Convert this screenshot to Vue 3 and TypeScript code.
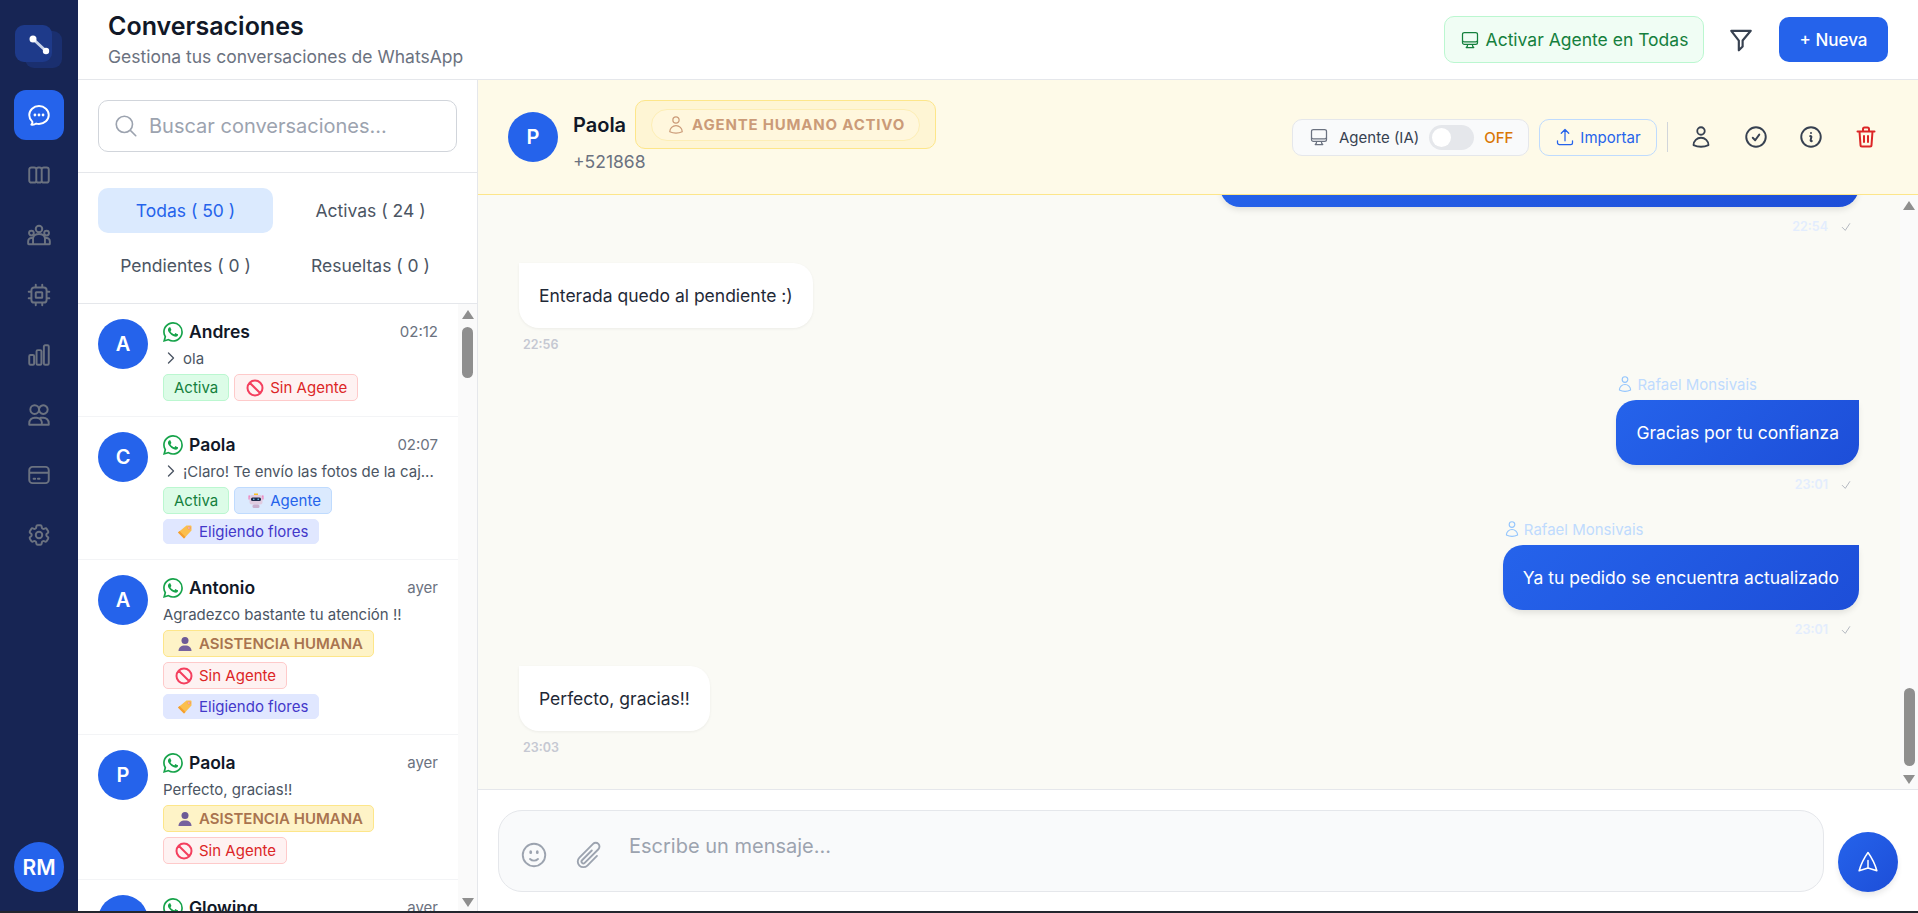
<script setup lang="ts">
const paths: Record<string, string> = {
  chat: "M8.625 12a.375.375 0 1 1-.75 0 .375.375 0 0 1 .75 0Zm0 0H8.25m4.125 0a.375.375 0 1 1-.75 0 .375.375 0 0 1 .75 0Zm0 0H12m4.125 0a.375.375 0 1 1-.75 0 .375.375 0 0 1 .75 0Zm0 0h-.375M21 12c0 4.556-4.03 8.25-9 8.25a9.764 9.764 0 0 1-2.555-.337A5.972 5.972 0 0 1 5.41 20.97a5.969 5.969 0 0 1-.474-.065 4.48 4.48 0 0 0 .978-2.025c.09-.457-.133-.901-.467-1.226C3.93 16.178 3 14.189 3 12c0-4.556 4.03-8.25 9-8.25s9 3.694 9 8.25Z",
  columns: "M5 5h2.5A2 2 0 0 1 9.5 7v10a2 2 0 0 1-2 2H5a2 2 0 0 1-2-2V7a2 2 0 0 1 2-2Zm4.5 2a2 2 0 0 1 2-2h1a2 2 0 0 1 2 2v10a2 2 0 0 1-2 2h-1a2 2 0 0 1-2-2M14.5 7a2 2 0 0 1 2-2H19a2 2 0 0 1 2 2v10a2 2 0 0 1-2 2h-2.5a2 2 0 0 1-2-2",
  group: "M15 6.5a3 3 0 1 1-6 0 3 3 0 0 1 6 0ZM7.2 10.2a2.2 2.2 0 1 1-4.4 0 2.2 2.2 0 0 1 4.4 0ZM21.2 10.2a2.2 2.2 0 1 1-4.4 0 2.2 2.2 0 0 1 4.4 0ZM2 20v-2.2a3 3 0 0 1 3-3h1.5a5.6 4.6 0 0 1 11 0H19a3 3 0 0 1 3 3V20a.5.5 0 0 1-.5.5h-19A.5.5 0 0 1 2 20Zm4.5-5.2V20m11-5.2V20",
  cpu: "M9 2.5V5m6-2.5V5M9 19v2.5m6-2.5v2.5M2.5 9H5m-2.500 6H5m14-6h2.500M19 15h2.500M7.500 5h9A2.500 2.500 0 0 1 19 7.500v9a2.500 2.500 0 0 1-2.500 2.500h-9A2.500 2.500 0 0 1 5 16.500v-9A2.500 2.500 0 0 1 7.500 5Zm2 4.500h5a.5.5 0 0 1 .5.5v4a.5.5 0 0 1-.5.5h-5a.5.5 0 0 1-.5-.5v-4a.5.5 0 0 1 .5-.5Z",
  chart: "M3 13.125C3 12.504 3.504 12 4.125 12h2.25c.621 0 1.125.504 1.125 1.125v6.75C7.5 20.496 6.996 21 6.375 21h-2.25A1.125 1.125 0 0 1 3 19.875v-6.75ZM9.750 8.625c0-.621.504-1.125 1.125-1.125h2.250c.621 0 1.125.504 1.125 1.125v11.250c0 .621-.504 1.125-1.125 1.125h-2.250a1.125 1.125 0 0 1-1.125-1.125V8.625ZM16.500 4.125c0-.621.504-1.125 1.125-1.125h2.250C20.496 3 21 3.504 21 4.125v15.750c0 .621-.504 1.125-1.125 1.125h-2.250a1.125 1.125 0 0 1-1.125-1.125V4.125Z",
  team: "M12 7a4 4 0 1 1-8 0 4 4 0 0 1 8 0Zm0 0a4 4 0 1 0 0-.01M12 7a4 4 0 1 1 8 0 4 4 0 0 1-8 0ZM3 21v-1.500a5 5 0 0 1 5-5h2a5 5 0 0 1 4.500 6.500H3Zm11 0h7v-1.500a5 5 0 0 0-5-5h-2.500",
  card: "M6 4.500h12A3 3 0 0 1 21 7.500v9a3 3 0 0 1-3 3H6a3 3 0 0 1-3-3v-9a3 3 0 0 1 3-3ZM3 10h18M7 15.500h1.500m2.500 0h1.500",
  cog: "M9.594 3.940c.09-.542.56-.94 1.110-.94h2.593c.55 0 1.020.398 1.110.94l.213 1.281c.063.374.313.686.645.870.074.04.147.083.22.127.325.196.72.257 1.075.124l1.217-.456a1.125 1.125 0 0 1 1.370.49l1.296 2.247a1.125 1.125 0 0 1-.26 1.431l-1.003.827c-.293.241-.438.613-.43.992a7.723 7.723 0 0 1 0 .255c-.008.378.137.75.43.991l1.004.827c.424.35.534.955.26 1.430l-1.298 2.247a1.125 1.125 0 0 1-1.369.491l-1.217-.456c-.355-.133-.75-.072-1.076.124a6.470 6.470 0 0 1-.22.128c-.331.183-.581.495-.644.869l-.213 1.281c-.09.543-.56.94-1.110.94h-2.594c-.55 0-1.019-.398-1.110-.94l-.213-1.281c-.062-.374-.312-.686-.644-.870a6.520 6.520 0 0 1-.22-.127c-.325-.196-.72-.257-1.076-.124l-1.217.456a1.125 1.125 0 0 1-1.369-.49l-1.297-2.247a1.125 1.125 0 0 1 .26-1.431l1.004-.827c.292-.24.437-.613.43-.991a6.932 6.932 0 0 1 0-.255c.007-.38-.138-.751-.43-.992l-1.004-.827a1.125 1.125 0 0 1-.26-1.430l1.297-2.247a1.125 1.125 0 0 1 1.370-.491l1.216.456c.356.133.751.072 1.076-.124.072-.044.146-.086.22-.128.332-.183.582-.495.644-.869l.214-1.280ZM15 12a3 3 0 1 1-6 0 3 3 0 0 1 6 0Z",
  monitor: "M9 17.250v1.007a3 3 0 0 1-.879 2.122L7.500 21h9l-.621-.621A3 3 0 0 1 15 18.257V17.250m6-12V15a2.250 2.250 0 0 1-2.250 2.250H5.250A2.250 2.250 0 0 1 3 15V5.250m18 0A2.250 2.250 0 0 0 18.750 3H5.250A2.250 2.250 0 0 0 3 5.250m18 0V12a2.250 2.250 0 0 1-2.250 2.250H5.250A2.250 2.250 0 0 1 3 12V5.250",
  funnel: "M3 3.500h18l-7.500 9v5.500L10 21.500v-9L3 3.500Z",
  search: "m21 21-5.197-5.197m0 0A7.500 7.500 0 1 0 5.196 5.196a7.500 7.500 0 0 0 10.607 10.607Z",
  upload: "M3 16.500v2.250A2.250 2.250 0 0 0 5.250 21h13.500A2.250 2.250 0 0 0 21 18.750V16.500m-13.500-9L12 3m0 0 4.500 4.500M12 3v13.500",
  user: "M15.750 6a3.750 3.750 0 1 1-7.500 0 3.750 3.750 0 0 1 7.500 0ZM4.501 20.118a7.500 7.500 0 0 1 14.998 0A17.933 17.933 0 0 1 12 21.750c-2.676 0-5.216-.584-7.499-1.632Z",
  check: "M9 12.750 11.250 15 15 9.750M21 12a9 9 0 1 1-18 0 9 9 0 0 1 18 0Z",
  info: "m11.250 11.250.041-.02a.75.75 0 0 1 1.063.852l-.708 2.836a.75.75 0 0 0 1.063.853l.041-.021M21 12a9 9 0 1 1-18 0 9 9 0 0 1 18 0Zm-9-3.750h.008v.008H12V8.250Z",
  trash: "M3.500 6.500h17M9 6.500V4a1.500 1.500 0 0 1 1.500-1.500h3A1.500 1.500 0 0 1 15 4v2.500M5.500 6.500l1 13.500a1.500 1.500 0 0 0 1.500 1.500h8a1.500 1.500 0 0 0 1.500-1.500l1-13.500M10 11v6m4-6v6",
  smile: "M15.182 15.182a4.500 4.500 0 0 1-6.364 0M21 12a9 9 0 1 1-18 0 9 9 0 0 1 18 0ZM9.750 9.750c0 .414-.168.75-.375.75S9 10.164 9 9.750 9.168 9 9.375 9s.375.336.375.75Zm5.250 0c0 .414-.168.75-.375.75s-.375-.336-.375-.75.168-.75.375-.75.375.336.375.75Z",
  clip: "m18.375 12.739-7.693 7.693a4.500 4.500 0 0 1-6.364-6.364l10.940-10.940A3 3 0 1 1 19.500 7.372L8.552 18.320m.009-.01-.01.01m5.699-9.941-7.810 7.810a1.500 1.500 0 0 0 2.112 2.130",
  send: "M6 12 3.269 3.125A59.769 59.769 0 0 1 21.485 12 59.768 59.768 0 0 1 3.270 20.875L5.999 12Zm0 0h7.500",
  chevron: "m8.250 4.500 7.500 7.500-7.500 7.500",
  ban: "M18.364 18.364A9 9 0 0 0 5.636 5.636m12.728 12.728A9 9 0 0 1 5.636 5.636m12.728 12.728L5.636 5.636",
  tick: "m4.500 12.750 6 6 9-13.500",
};

const whatsapp =
  "M13.601 2.326A7.854 7.854 0 0 0 7.994 0C3.627 0 .068 3.558.064 7.926c0 1.399.366 2.76 1.057 3.965L0 16l4.204-1.102a7.933 7.933 0 0 0 3.79.965h.004c4.368 0 7.926-3.558 7.93-7.93A7.898 7.898 0 0 0 13.6 2.326zM7.994 14.521a6.573 6.573 0 0 1-3.356-.92l-.24-.144-2.494.654.666-2.433-.156-.251a6.56 6.56 0 0 1-1.007-3.505c0-3.626 2.957-6.584 6.591-6.584a6.56 6.56 0 0 1 4.66 1.931 6.557 6.557 0 0 1 1.928 4.66c-.004 3.639-2.961 6.592-6.592 6.592zm3.615-4.934c-.197-.099-1.17-.578-1.353-.646-.182-.065-.315-.099-.445.099-.133.197-.513.646-.627.775-.114.133-.232.148-.43.05-.197-.1-.836-.308-1.592-.985-.59-.525-.985-1.175-1.103-1.372-.114-.198-.011-.304.088-.403.087-.088.197-.232.296-.346.1-.114.133-.198.198-.33.065-.134.034-.248-.015-.347-.05-.099-.445-1.076-.612-1.47-.16-.389-.323-.335-.445-.34-.114-.007-.247-.007-.38-.007a.729.729 0 0 0-.529.247c-.182.198-.691.677-.691 1.654 0 .977.71 1.916.81 2.049.098.133 1.394 2.132 3.383 2.992.47.205.84.326 1.129.418.475.152.904.129 1.246.08.38-.058 1.171-.48 1.338-.943.164-.464.164-.86.114-.943-.049-.084-.182-.133-.38-.232z";

const navItems = ["chat", "columns", "group", "cpu", "chart", "team", "card", "cog"];

const tabs = [
  { label: "Todas ( 50 )", active: true },
  { label: "Activas ( 24 )", active: false },
  { label: "Pendientes ( 0 )", active: false },
  { label: "Resueltas ( 0 )", active: false },
];

type Tag = "activa" | "sin" | "agente" | "flores" | "humana";

const conversations: { initial: string; name: string; time: string; preview: string; sent: boolean; tags: Tag[] }[] = [
  { initial: "A", name: "Andres", time: "02:12", preview: "ola", sent: true, tags: ["activa", "sin"] },
  { initial: "C", name: "Paola", time: "02:07", preview: "¡Claro! Te envío las fotos de la caj...", sent: true, tags: ["activa", "agente", "flores"] },
  { initial: "A", name: "Antonio", time: "ayer", preview: "Agradezco bastante tu atención !!", sent: false, tags: ["humana", "sin", "flores"] },
  { initial: "P", name: "Paola", time: "ayer", preview: "Perfecto, gracias!!", sent: false, tags: ["humana", "sin"] },
  { initial: "G", name: "Glowing", time: "ayer", preview: "", sent: false, tags: [] },
];

const tagLabels: Record<Tag, string> = {
  activa: "Activa",
  sin: "Sin Agente",
  agente: "Agente",
  flores: "Eligiendo flores",
  humana: "ASISTENCIA HUMANA",
};

const messages = [
  { out: true, text: "", time: "22:54", clipped: true },
  { out: false, text: "Enterada quedo al pendiente :)", time: "22:56" },
  { out: true, author: "Rafael Monsivais", text: "Gracias por tu confianza", time: "23:01" },
  { out: true, author: "Rafael Monsivais", text: "Ya tu pedido se encuentra actualizado", time: "23:01" },
  { out: false, text: "Perfecto, gracias!!", time: "23:03" },
];

const headerActions = [
  { icon: "user", cls: "" },
  { icon: "check", cls: "wide" },
  { icon: "info", cls: "wide" },
  { icon: "trash", cls: "danger" },
];
</script>

<template>
  <div class="app">
    <aside class="rail">
      <div class="logo">
        <svg viewBox="0 0 37 37" class="logo-mark">
          <line x1="18" y1="14" x2="31" y2="26" stroke="#c7d2e8" stroke-width="3" />
          <circle cx="18" cy="14" r="3.500" fill="#fff" />
          <circle cx="31" cy="26" r="3.200" fill="#fff" />
        </svg>
      </div>
      <nav class="rail-nav">
        <a v-for="(item, i) in navItems" :key="item" class="rail-link" :class="{ active: i === 0 }">
          <svg viewBox="0 0 24 24" class="icon-26"><path :d="paths[item]" /></svg>
        </a>
      </nav>
      <div class="rail-avatar">RM</div>
    </aside>

    <div class="main">
      <header class="topbar">
        <div>
          <h1>Conversaciones</h1>
          <p>Gestiona tus conversaciones de WhatsApp</p>
        </div>
        <div class="topbar-actions">
          <button class="btn-agent-all">
            <svg viewBox="0 0 24 24" class="icon-20"><path :d="paths.monitor" /></svg>
            Activar Agente en Todas
          </button>
          <button class="btn-filter">
            <svg viewBox="0 0 24 24" class="icon-26"><path :d="paths.funnel" /></svg>
          </button>
          <button class="btn-new">+ Nueva</button>
        </div>
      </header>

      <div class="content">
        <section class="list-panel">
          <div class="search-box">
            <div class="search-input">
              <svg viewBox="0 0 24 24" class="icon-26"><path :d="paths.search" /></svg>
              <span>Buscar conversaciones...</span>
            </div>
          </div>
          <div class="tabs">
            <button v-for="tab in tabs" :key="tab.label" class="tab" :class="{ active: tab.active }">{{ tab.label }}</button>
          </div>
          <div class="list-wrap">
            <ul class="conv-list">
              <li v-for="(c, i) in conversations" :key="i" class="conv">
                <div class="avatar">{{ c.initial }}</div>
                <div class="conv-body">
                  <div class="conv-top">
                    <svg viewBox="0 0 16 16" class="wa"><path :d="whatsapp" /></svg>
                    <strong>{{ c.name }}</strong>
                    <time>{{ c.time }}</time>
                  </div>
                  <div v-if="c.preview" class="conv-preview">
                    <svg v-if="c.sent" viewBox="0 0 24 24" class="icon-chevron"><path :d="paths.chevron" /></svg>
                    <span>{{ c.preview }}</span>
                  </div>
                  <div v-if="c.tags.length" class="tags">
                    <span v-for="t in c.tags" :key="t" class="tag" :class="t">
                      <svg v-if="t === 'sin'" viewBox="0 0 24 24" class="icon-ban"><path :d="paths.ban" /></svg>
                      <svg v-if="t === 'agente'" viewBox="0 0 16 16" class="emoji">
                        <rect x="0.500" y="2.500" width="1.500" height="4" fill="#f472b6" />
                        <rect x="14" y="2.500" width="1.500" height="4" fill="#f472b6" />
                        <rect x="6" y="0.500" width="4" height="2" fill="#fbbf24" />
                        <rect x="1.500" y="2" width="13" height="9.500" rx="2.500" fill="#e0cbe0" />
                        <rect x="3" y="4.500" width="10" height="3.500" rx="1.500" fill="#1e2a4a" />
                        <circle cx="5.800" cy="6.200" r="0.800" fill="#7dd3fc" />
                        <circle cx="10.200" cy="6.200" r="0.800" fill="#7dd3fc" />
                        <rect x="4.500" y="11.500" width="7" height="3.500" rx="1.500" fill="#c9aecd" />
                      </svg>
                      <svg v-if="t === 'flores'" viewBox="0 0 16 16" class="emoji">
                        <path d="M9.500 1.500h4.300a.7.7 0 0 1 .7.7v4.300L7 14.500 1 8.500Z" fill="#fbbf4d" />
                        <path d="M7 14.500 1 8.500l1.500-1.500 6 6Z" fill="#f59e2e" />
                        <circle cx="12" cy="4" r="1.100" fill="#fde9c8" stroke="#e46a8a" stroke-width="0.500" />
                      </svg>
                      <svg v-if="t === 'humana'" viewBox="0 0 16 16" class="emoji">
                        <circle cx="8" cy="4.500" r="3.500" fill="#6d5a96" />
                        <path d="M1.500 15c0-3.500 2.500-5.500 6.500-5.500s6.500 2 6.500 5.500Z" fill="#76629e" />
                      </svg>
                      {{ tagLabels[t] }}
                    </span>
                  </div>
                </div>
              </li>
            </ul>
            <div class="scrollbar list-scrollbar">
              <i class="arrow-up"></i>
              <div class="thumb list-thumb"></div>
              <i class="arrow-down"></i>
            </div>
          </div>
        </section>

        <section class="chat">
          <div class="chat-head">
            <div class="avatar">P</div>
            <div class="chat-who">
              <div class="chat-name">
                <strong>Paola</strong>
                <div class="human-badge">
                  <span class="human-pill">
                    <svg viewBox="0 0 24 24" class="icon-20"><path :d="paths.user" /></svg>
                    AGENTE HUMANO ACTIVO
                  </span>
                </div>
              </div>
              <span class="chat-phone">+521868</span>
            </div>
            <div class="chat-tools">
              <div class="agent-switch">
                <svg viewBox="0 0 24 24" class="icon-20"><path :d="paths.monitor" /></svg>
                <span class="agent-label">Agente (IA)</span>
                <span class="toggle"><i></i></span>
                <span class="agent-off">OFF</span>
              </div>
              <button class="btn-import">
                <svg viewBox="0 0 24 24" class="icon-20"><path :d="paths.upload" /></svg>
                Importar
              </button>
              <span class="tool-divider"></span>
              <button v-for="a in headerActions" :key="a.icon" class="tool" :class="a.cls">
                <svg viewBox="0 0 24 24"><path :d="paths[a.icon]" /></svg>
              </button>
            </div>
          </div>

          <div class="chat-scroll">
            <div class="messages">
              <div v-for="(m, i) in messages" :key="i" class="msg" :class="m.out ? 'out' : 'in'">
                <div class="msg-inner">
                  <div v-if="m.author" class="msg-author">
                    <svg viewBox="0 0 24 24" class="icon-18"><path :d="paths.user" /></svg>
                    {{ m.author }}
                  </div>
                  <div class="bubble" :class="{ clipped: m.clipped }">{{ m.text }}</div>
                  <div class="msg-meta">
                    <span>{{ m.time }}</span>
                    <svg v-if="m.out" viewBox="0 0 24 24" class="icon-12"><path :d="paths.tick" /></svg>
                  </div>
                </div>
              </div>
            </div>
            <div class="scrollbar chat-scrollbar">
              <i class="arrow-up"></i>
              <div class="thumb chat-thumb"></div>
              <i class="arrow-down"></i>
            </div>
          </div>

          <div class="composer">
            <div class="composer-box">
              <svg viewBox="0 0 24 24" class="icon-30"><path :d="paths.smile" /></svg>
              <svg viewBox="0 0 24 24" class="icon-30"><path :d="paths.clip" /></svg>
              <span class="composer-text">Escribe un mensaje...</span>
            </div>
            <button class="send">
              <svg viewBox="0 0 24 24" class="icon-send"><path :d="paths.send" /></svg>
            </button>
          </div>
        </section>
      </div>
    </div>
  </div>
</template>

<style>
html,
body {
  background: #23262e;
}
</style>

<style scoped>
* {
  box-sizing: border-box;
}
svg {
  fill: none;
  stroke: currentColor;
  stroke-width: 1.5;
  stroke-linecap: round;
  stroke-linejoin: round;
  flex: none;
  display: block;
}
button {
  font: inherit;
  border: none;
  background: none;
  cursor: pointer;
}
.icon-12 { width: 12px; height: 12px; }
.icon-18 { width: 18px; height: 18px; }
.icon-20 { width: 20px; height: 20px; }
.icon-26 { width: 26px; height: 26px; }
.icon-30 { width: 30px; height: 30px; }

.app {
  display: flex;
  height: 911px;
  overflow: hidden;
  font-family: Inter, "Liberation Sans", sans-serif;
  color: #111827;
  background: #fff;
}

/* left rail */
.rail {
  width: 78px;
  flex: none;
  isolation: isolate;
  background: #172554;
  display: flex;
  flex-direction: column;
  align-items: center;
  padding: 25px 0 19px;
}
.logo {
  position: relative;
  align-self: flex-start;
  margin-left: 15px;
  width: 37px;
  height: 37px;
  border-radius: 9px;
  background: #1e3a8a;
}
.logo::before {
  content: "";
  position: absolute;
  left: 10px;
  top: 6px;
  width: 37px;
  height: 37px;
  border-radius: 9px;
  background: #1e3a8a;
  opacity: 0.5;
  z-index: -1;
}
.logo-mark {
  position: relative;
  width: 37px;
  height: 37px;
  stroke: none;
}
.rail-nav {
  display: flex;
  flex-direction: column;
  gap: 10px;
  margin-top: 28px;
  flex: 1;
}
.rail-link {
  width: 50px;
  height: 50px;
  border-radius: 12px;
  display: flex;
  align-items: center;
  justify-content: center;
  color: #6b7280;
}
.rail-link svg {
  stroke-width: 1.8;
}
.rail-link.active {
  background: #2563eb;
  color: #fff;
}
.rail-avatar {
  width: 50px;
  height: 50px;
  border-radius: 50%;
  background: #2563eb;
  color: #fff;
  font-weight: 600;
  font-size: 21px;
  display: flex;
  align-items: center;
  justify-content: center;
}

.main {
  flex: 1;
  min-width: 0;
  display: flex;
  flex-direction: column;
}

/* top bar */
.topbar {
  height: 80px;
  flex: none;
  border-bottom: 1px solid #e5e7eb;
  display: flex;
  align-items: center;
  justify-content: space-between;
  padding: 0 30px;
}
.topbar h1 {
  margin: 0 0 3px;
  font-size: 25px;
  line-height: 32px;
  font-weight: 600;
  color: #111827;
}
.topbar p {
  margin: 0;
  font-size: 17.500px;
  line-height: 24px;
  color: #6b7280;
}
.topbar-actions {
  display: flex;
  align-items: center;
}
.btn-agent-all {
  height: 47px;
  width: 260px;
  padding: 0;
  display: flex;
  align-items: center;
  justify-content: center;
  gap: 6px;
  border: 1px solid #bbf7d0;
  border-radius: 10px;
  background: #f0fdf4;
  color: #15803d;
  font-size: 17.500px;
}
.btn-filter {
  width: 50px;
  height: 45px;
  margin: 0 13px 0 12px;
  color: #374151;
  display: flex;
  align-items: center;
  justify-content: center;
  padding: 0;
}
.btn-filter svg {
  stroke-width: 2;
}
.btn-new {
  width: 109px;
  height: 45px;
  border-radius: 10px;
  background: #2563eb;
  color: #fff;
  font-size: 17px;
  font-weight: 500;
  padding: 0;
}

.content {
  flex: 1;
  min-height: 0;
  display: flex;
}

/* conversation list */
.list-panel {
  width: 400px;
  flex: none;
  border-right: 1px solid #e5e7eb;
  display: flex;
  flex-direction: column;
}
.search-box {
  height: 93px;
  flex: none;
  padding: 20px;
  border-bottom: 1px solid #e5e7eb;
}
.search-input {
  height: 52px;
  border: 1px solid #d1d5db;
  border-radius: 10px;
  display: flex;
  align-items: center;
  gap: 10px;
  padding-left: 14px;
  color: #9ca3af;
  font-size: 20px;
}
.tabs {
  height: 131px;
  flex: none;
  padding: 15px 20px 0;
  display: grid;
  grid-template-columns: 175px 175px;
  grid-auto-rows: 45px;
  gap: 10px;
  border-bottom: 1px solid #e5e7eb;
}
.tab {
  border-radius: 10px;
  font-size: 17.500px;
  color: #4b5563;
  padding: 0;
}
.tab.active {
  background: #dbeafe;
  color: #2563eb;
}
.list-wrap {
  flex: 1;
  min-height: 0;
  display: flex;
}
.conv-list {
  flex: 1;
  min-width: 0;
  margin: 0;
  padding: 0;
  list-style: none;
  overflow: hidden;
}
.conv {
  display: flex;
  gap: 15px;
  padding: 15px 20px;
  border-bottom: 1px solid #f3f4f6;
}
.avatar {
  width: 50px;
  height: 50px;
  flex: none;
  border-radius: 50%;
  background: #2563eb;
  color: #fff;
  font-size: 20px;
  font-weight: 600;
  display: flex;
  align-items: center;
  justify-content: center;
}
.conv-body {
  flex: 1;
  min-width: 0;
}
.conv-top {
  display: flex;
  align-items: center;
  height: 24px;
}
.wa {
  width: 20px;
  height: 20px;
  margin-top: 1px;
  fill: #16a34a;
  stroke: none;
  margin-right: 6px;
}
.conv-top strong {
  font-size: 17.500px;
  font-weight: 600;
  flex: 1;
}
.conv-top time {
  font-size: 15px;
  color: #6b7280;
}
.conv-preview {
  display: flex;
  align-items: center;
  gap: 4px;
  height: 22px;
  margin: 4px 0 5px;
  font-size: 15px;
  color: #4b5563;
  white-space: nowrap;
}
.icon-chevron {
  width: 16px;
  height: 16px;
  stroke-width: 2;
}
.tags {
  display: flex;
  flex-wrap: wrap;
  gap: 5px;
}
.tag {
  display: inline-flex;
  align-items: center;
  gap: 6px;
  height: 27px;
  padding: 0 10px;
  border: 1px solid;
  border-radius: 5px;
  font-size: 15px;
  white-space: nowrap;
}
.tag.activa {
  background: #dcfce7;
  border-color: #bbf7d0;
  color: #15803d;
}
.tag.sin {
  background: #fef2f2;
  border-color: #fecaca;
  color: #dc2626;
}
.tag.agente {
  background: #dbeafe;
  border-color: #bfdbfe;
  color: #2563eb;
}
.tag.flores {
  height: 25px;
  background: #e0e7ff;
  border-color: #e0e7ff;
  color: #4338ca;
}
.tag.humana {
  background: #fef3c7;
  border-color: #fde68a;
  color: #a9744f;
  font-weight: 600;
}
.icon-ban {
  width: 20px;
  height: 20px;
  stroke-width: 2.4;
  margin-right: -1px;
  color: #f43f5e;
}
.emoji {
  width: 16px;
  height: 16px;
  stroke: none;
  margin-left: 3px;
}

/* fake native scrollbars */
.scrollbar {
  flex: none;
  background: #fafafa;
  display: flex;
  flex-direction: column;
  align-items: center;
}
.thumb {
  width: 11px;
  border-radius: 6px;
  background: #8f8f8f;
}
.arrow-up,
.arrow-down {
  width: 0;
  height: 0;
  border-left: 6px solid transparent;
  border-right: 6px solid transparent;
}
.arrow-up {
  border-bottom: 9px solid #8f8f8f;
}
.arrow-down {
  border-top: 9px solid #8f8f8f;
}
.list-scrollbar {
  width: 19px;
  padding: 6px 0 4px;
}
.list-thumb {
  height: 51px;
  margin-top: 8px;
  margin-bottom: auto;
}
.chat-scrollbar {
  width: 18px;
  padding: 6px 0 5px;
}
.chat-thumb {
  height: 78px;
  margin-top: auto;
  margin-bottom: 9px;
}

/* chat */
.chat {
  flex: 1;
  min-width: 0;
  display: flex;
  flex-direction: column;
}
.chat-head {
  height: 115px;
  flex: none;
  display: flex;
  align-items: center;
  padding: 0 30px;
  background: #fefae8;
  border-bottom: 1px solid #fde68a;
}
.chat-who {
  margin-left: 15px;
}
.chat-name {
  display: flex;
  align-items: center;
  gap: 9px;
  height: 49px;
}
.chat-name strong {
  font-size: 20px;
  font-weight: 600;
}
.human-badge {
  height: 49px;
  width: 301px;
  display: flex;
  align-items: center;
  justify-content: center;
  background: #fef5d4;
  border: 1px solid #fde68a;
  border-radius: 10px;
}
.human-pill {
  height: 32px;
  width: 269px;
  display: flex;
  align-items: center;
  justify-content: center;
  gap: 6px;
  border-radius: 16px;
  background: #fff7dd;
  border: 1px solid #fdeeb5;
  color: #cb9b78;
  font-size: 15px;
  font-weight: 700;
  letter-spacing: 0.8px;
}
.chat-phone {
  display: block;
  margin-top: 1px;
  font-size: 17.500px;
  line-height: 24px;
  color: #6b7280;
}
.chat-tools {
  margin-left: auto;
  display: flex;
  align-items: center;
}
.agent-switch {
  height: 37px;
  width: 237px;
  display: flex;
  align-items: center;
  padding-left: 16px;
  border: 1px solid #e5e7eb;
  border-radius: 10px;
  background: #f9fafb;
  color: #6b7280;
}
.agent-label {
  margin-left: 10px;
  font-size: 15px;
  color: #374151;
  white-space: nowrap;
}
.toggle {
  width: 45px;
  height: 25px;
  margin-left: 10px;
  border-radius: 13px;
  background: #e5e7eb;
  padding: 3px;
  flex: none;
}
.toggle i {
  display: block;
  width: 19px;
  height: 19px;
  border-radius: 50%;
  background: #fff;
}
.agent-off {
  margin-left: 10px;
  font-size: 15px;
  font-weight: 500;
  color: #d97706;
}
.btn-import {
  height: 37px;
  width: 118px;
  margin-left: 10px;
  display: flex;
  align-items: center;
  justify-content: center;
  gap: 5px;
  border: 1px solid #bfdbfe;
  border-radius: 10px;
  color: #2563eb;
  font-size: 15px;
  padding: 0;
}
.tool-divider {
  width: 1px;
  height: 30px;
  background: #d1d5db;
  margin-left: 10px;
}
.tool {
  width: 45px;
  height: 37px;
  margin-left: 10px;
  padding: 0;
  display: flex;
  align-items: center;
  justify-content: center;
  color: #374151;
}
.tool svg {
  width: 24px;
  height: 24px;
  stroke-width: 1.8;
}
.tool.wide svg {
  width: 26px;
  height: 26px;
}
.tool.danger {
  color: #dc2626;
}
.tool.danger svg {
  stroke-width: 2;
}
.chat-scroll {
  flex: 1;
  min-height: 0;
  display: flex;
  background: #fafaf5;
}
.messages {
  flex: 1;
  min-width: 0;
  overflow: hidden;
  display: flex;
  flex-direction: column;
  justify-content: flex-end;
  padding: 0 41px 32px;
}
.msg {
  display: flex;
  flex: none;
  margin-top: 27px;
}
.msg.in + .msg.out {
  margin-top: 20px;
}
.msg.out + .msg.out {
  margin-top: 25px;
}
.msg.out {
  justify-content: flex-end;
}
.msg-inner {
  display: flex;
  flex-direction: column;
}
.msg-author {
  display: flex;
  align-items: center;
  gap: 3px;
  height: 20px;
  margin-bottom: 6px;
  font-size: 15px;
  color: #bfdbfe;
}
.msg-author svg {
  color: #93c5fd;
}
.bubble {
  padding: 20px;
  min-height: 65px;
  border-radius: 20px 0 20px 20px;
  font-size: 17.500px;
  line-height: 25px;
  color: #fff;
  background: linear-gradient(135deg, #2563eb, #1d4ed8);
  box-shadow: 0 4px 6px -1px rgba(0, 0, 0, 0.1);
  white-space: nowrap;
}
.bubble.clipped {
  width: 639px;
}
.msg.in .bubble {
  background: #fff;
  color: #1f2937;
  border-radius: 0 20px 20px 20px;
  box-shadow: 0 1px 3px rgba(0, 0, 0, 0.06);
}
.msg-meta {
  display: flex;
  align-items: flex-start;
  justify-content: flex-end;
  gap: 12px;
  height: 17px;
  line-height: 16px;
  margin-top: 12px;
  padding-right: 7px;
  font-size: 12.500px;
  font-weight: 600;
  color: #e3edfe;
}
.msg-meta svg {
  margin-top: 2px;
  color: #9ca3af;
}
.msg.in .msg-meta {
  justify-content: flex-start;
  margin-top: 9px;
  padding-left: 4px;
  color: #c5c8d2;
}

/* composer */
.composer {
  height: 122px;
  flex: none;
  border-top: 1px solid #e5e7eb;
  display: flex;
  align-items: flex-start;
  padding: 20px 20px 0;
  gap: 14px;
}
.composer-box {
  flex: 1;
  height: 82px;
  border: 1px solid #e5e7eb;
  border-radius: 24px;
  background: #f9fafb;
  color: #9ca3af;
  display: flex;
  align-items: flex-start;
  padding: 29px 0 0 20px;
  gap: 25px;
}
.composer-text {
  margin-top: -8px;
  font-size: 20px;
  line-height: 28px;
}
.send {
  width: 60px;
  height: 60px;
  margin-top: 22px;
  padding: 0;
  border-radius: 50%;
  color: #fff;
  background: linear-gradient(135deg, #2563eb, #1d4ed8);
  box-shadow: 0 4px 6px -1px rgba(0, 0, 0, 0.1);
  display: flex;
  align-items: center;
  justify-content: center;
}
.icon-send {
  width: 24px;
  height: 24px;
  transform: rotate(-90deg);
}
</style>
